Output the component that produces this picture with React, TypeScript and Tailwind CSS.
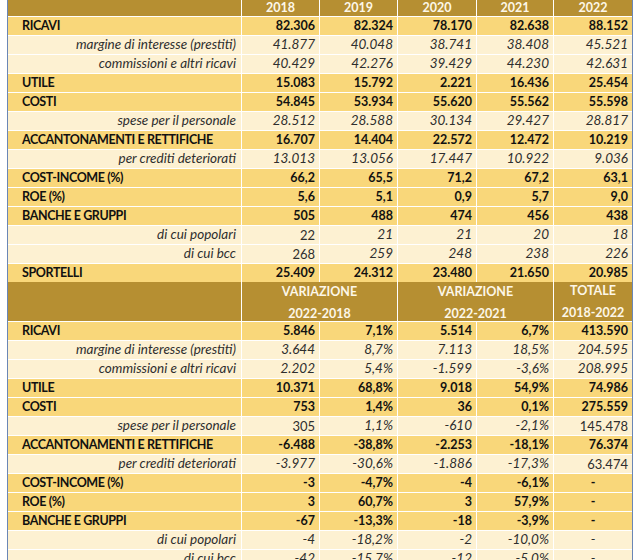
import React from "react";

type Row = {
  label: string;
  values: string[];
  sub?: boolean;
  upright?: number[];
};

const years = ["2018", "2019", "2020", "2021", "2022"];

const topRows: Row[] = [
  { label: "RICAVI", values: ["82.306", "82.324", "78.170", "82.638", "88.152"] },
  { label: "margine di interesse (prestiti)", sub: true, values: ["41.877", "40.048", "38.741", "38.408", "45.521"] },
  { label: "commissioni e altri ricavi", sub: true, values: ["40.429", "42.276", "39.429", "44.230", "42.631"] },
  { label: "UTILE", values: ["15.083", "15.792", "2.221", "16.436", "25.454"] },
  { label: "COSTI", values: ["54.845", "53.934", "55.620", "55.562", "55.598"] },
  { label: "spese per il personale", sub: true, values: ["28.512", "28.588", "30.134", "29.427", "28.817"] },
  { label: "ACCANTONAMENTI E RETTIFICHE", values: ["16.707", "14.404", "22.572", "12.472", "10.219"] },
  { label: "per crediti deteriorati", sub: true, values: ["13.013", "13.056", "17.447", "10.922", "9.036"] },
  { label: "COST-INCOME (%)", values: ["66,2", "65,5", "71,2", "67,2", "63,1"] },
  { label: "ROE (%)", values: ["5,6", "5,1", "0,9", "5,7", "9,0"] },
  { label: "BANCHE E GRUPPI", values: ["505", "488", "474", "456", "438"] },
  { label: "di cui popolari", sub: true, upright: [0], values: ["22", "21", "21", "20", "18"] },
  { label: "di cui bcc", sub: true, upright: [0], values: ["268", "259", "248", "238", "226"] },
  { label: "SPORTELLI", values: ["25.409", "24.312", "23.480", "21.650", "20.985"] },
];

const bottomRows: Row[] = [
  { label: "RICAVI", values: ["5.846", "7,1%", "5.514", "6,7%", "413.590"] },
  { label: "margine di interesse (prestiti)", sub: true, values: ["3.644", "8,7%", "7.113", "18,5%", "204.595"] },
  { label: "commissioni e altri ricavi", sub: true, values: ["2.202", "5,4%", "-1.599", "-3,6%", "208.995"] },
  { label: "UTILE", values: ["10.371", "68,8%", "9.018", "54,9%", "74.986"] },
  { label: "COSTI", values: ["753", "1,4%", "36", "0,1%", "275.559"] },
  { label: "spese per il personale", sub: true, upright: [0, 4], values: ["305", "1,1%", "-610", "-2,1%", "145.478"] },
  { label: "ACCANTONAMENTI E RETTIFICHE", values: ["-6.488", "-38,8%", "-2.253", "-18,1%", "76.374"] },
  { label: "per crediti deteriorati", sub: true, upright: [4], values: ["-3.977", "-30,6%", "-1.886", "-17,3%", "63.474"] },
  { label: "COST-INCOME (%)", values: ["-3", "-4,7%", "-4", "-6,1%", "-"] },
  { label: "ROE (%)", values: ["3", "60,7%", "3", "57,9%", "-"] },
  { label: "BANCHE E GRUPPI", values: ["-67", "-13,3%", "-18", "-3,9%", "-"] },
  { label: "di cui popolari", sub: true, values: ["-4", "-18,2%", "-2", "-10,0%", "-"] },
  { label: "di cui bcc", sub: true, values: ["-42", "-15,7%", "-12", "-5,0%", "-"] },
];

const gridCols = "grid grid-cols-[233px_77px_77px_78px_76px_78px] gap-px bg-white";

function DataRow({ row }: { row: Row }) {
  const bg = row.sub ? "bg-[#fdf1d2]" : "bg-[#f9d77a]";
  return (
    <>
      <div
        className={`${bg} h-[18px] flex items-center ${
          row.sub
            ? "justify-end pr-[5px] italic text-[13.5px] text-[#2e2e2e]"
            : "pl-[14px] font-bold tracking-[-0.4px] text-[#111]"
        }`}
      >
        {row.label}
      </div>
      {row.values.map((v, i) => {
        const dash = v === "-";
        const upright = row.upright?.includes(i);
        return (
          <div
            key={i}
            className={`${bg} h-[18px] flex items-center ${dash ? "justify-center" : "justify-end pr-[4px]"} ${
              row.sub
                ? upright
                  ? "text-[13px] text-[#2e2e2e]"
                  : "italic text-[13.5px] text-[#2e2e2e]"
                : "font-bold text-[#111]"
            }`}
          >
            {v}
          </div>
        );
      })}
    </>
  );
}

export default function App() {
  return (
    <div className="h-[560px] w-[640px] overflow-hidden bg-white flex text-[12.5px] leading-none font-['Lato',sans-serif]">
      <div className="w-[7px] shrink-0" />
      <div className="w-px shrink-0 bg-[#6a86b6]" />
      <div className="w-[624px] shrink-0 flex flex-col">
        <div className={gridCols}>
          <div className="bg-[#b68f32] h-[16px]" />
          {years.map((y) => (
            <div key={y} className="bg-[#b68f32] h-[16px] flex items-center justify-center font-bold text-[#fdf7e8]">
              {y}
            </div>
          ))}
          {topRows.map((r) => (
            <DataRow key={r.label} row={r} />
          ))}
        </div>
        <div className="h-px bg-[#9a9a9a]" />
        <div className={gridCols}>
          <div className="bg-[#b68f32] h-[39px]" />
          <div className="col-span-2 bg-[#b68f32] h-[39px] pt-[3px] flex flex-col items-center justify-center gap-[9px] font-bold text-[#fdf7e8]">
            <span>VARIAZIONE</span>
            <span>2022-2018</span>
          </div>
          <div className="col-span-2 bg-[#b68f32] h-[39px] pt-[3px] flex flex-col items-center justify-center gap-[9px] font-bold text-[#fdf7e8]">
            <span>VARIAZIONE</span>
            <span>2022-2021</span>
          </div>
          <div className="bg-[#b68f32] h-[39px] pt-[1px] flex flex-col items-center justify-center gap-[9px] font-bold text-[#fdf7e8]">
            <span>TOTALE</span>
            <span>2018-2022</span>
          </div>
          {bottomRows.map((r) => (
            <DataRow key={r.label} row={r} />
          ))}
        </div>
      </div>
      <div className="w-px shrink-0 bg-[#6a86b6]" />
      <div className="flex-1" />
    </div>
  );
}
